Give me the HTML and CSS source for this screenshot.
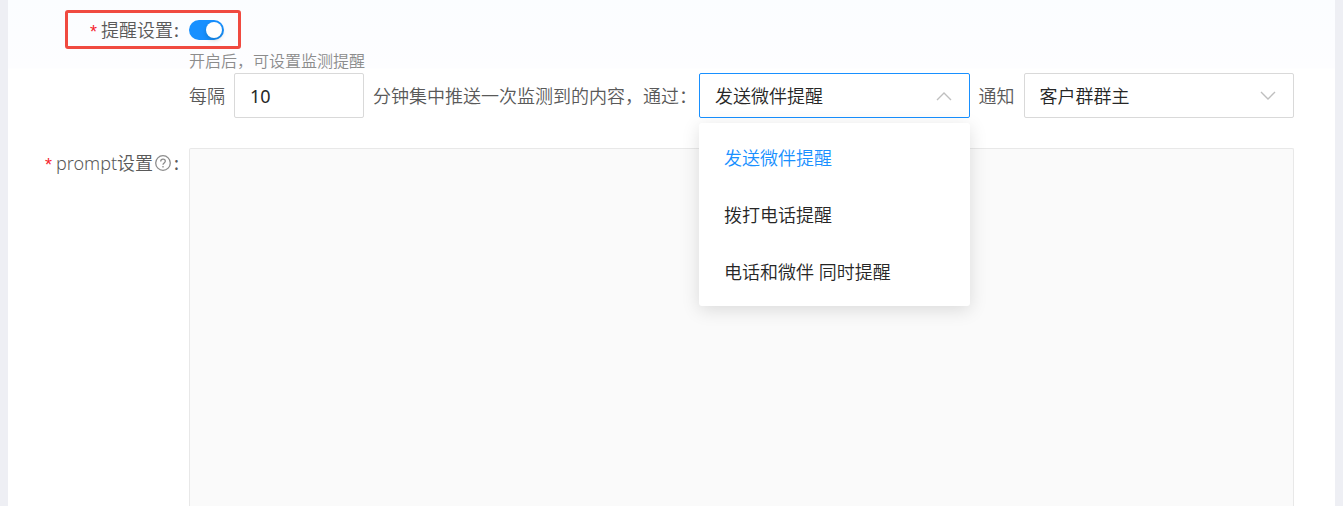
FILE: index.html
```html
<!DOCTYPE html>
<html lang="zh-CN">

<head>
    <meta charset="UTF-8">
    <meta name="viewport" content="width=device-width, initial-scale=1.0">
    <title>提醒设置</title>
    <link rel="stylesheet" href="styles.css">
</head>

<body>
    <form class="page">
        <div class="form-item">
            <div class="label">
                <span class="required">*</span>
                <label for="remind">提醒设置</label>
                <span class="colon">:</span>
            </div>
            <div class="control switch-line">
                <input type="checkbox" id="remind" class="switch" checked>
            </div>
            <!-- 红色标注框 -->
            <div class="mark"></div>
        </div>

        <div class="form-item">
            <div class="control">
                <p class="tip">开启后，可设置监测提醒</p>
                <div class="remind-row">
                    <label for="minute">每隔</label>
                    <input type="text" id="minute" class="ipt" value="10">
                    <label for="way" class="way-label">分钟集中推送一次监测到的内容，通过：</label>
                    <div class="select-box select-open">
                        <select id="way" class="select">
                            <option selected>发送微伴提醒</option>
                            <option>拨打电话提醒</option>
                            <option>电话和微伴 同时提醒</option>
                        </select>
                        <svg class="arrow" viewBox="0 0 16 10">
                            <path d="M1 9l7-7 7 7" />
                        </svg>
                        <!-- 下拉菜单 -->
                        <ul class="menu">
                            <li><button type="button" class="current">发送微伴提醒</button></li>
                            <li><button type="button">拨打电话提醒</button></li>
                            <li><button type="button">电话和微伴 同时提醒</button></li>
                        </ul>
                    </div>
                    <label for="target">通知</label>
                    <div class="select-box">
                        <select id="target" class="select">
                            <option selected>客户群群主</option>
                        </select>
                        <svg class="arrow" viewBox="0 0 16 10">
                            <path d="M1 1l7 7 7-7" />
                        </svg>
                    </div>
                </div>
            </div>
        </div>

        <div class="form-item prompt-item">
            <div class="label">
                <span class="required">*</span>
                <label for="prompt">prompt设置</label>
                <svg class="help" viewBox="0 0 16 16">
                    <circle cx="8" cy="8" r="7.3" />
                    <path d="M5.7 6.5c0-1.4 1-2.3 2.3-2.3s2.3.9 2.3 2.1c0 1.6-2.3 1.7-2.3 3.4" />
                    <path d="M8 11v1.4" />
                </svg>
                <span class="colon">:</span>
            </div>
            <div class="control">
                <textarea id="prompt" class="prompt"></textarea>
            </div>
        </div>
    </form>
</body>

</html>
```
FILE: styles.css
```css
* {
    margin: 0;
    padding: 0;
    box-sizing: border-box;
}

body,
input,
select,
textarea,
button {
    font-family: "Noto Sans", "Noto Sans CJK SC", sans-serif;
    font-size: 18px;
    font-weight: 350;
}

body {
    padding: 0 8px;
    background: #eeeff4;
    color: #595959;
    line-height: 30px;
}

ul {
    list-style: none;
}

.page {
    display: flex;
    flex-direction: column;
    height: 100vh;
    padding: 15px 41px 0 0;
    background: linear-gradient(#fbfdff, #fdfdff 68px, #fff 69px);
}

.form-item {
    position: relative;
    display: grid;
    grid-template-columns: 181px 1fr;
}

.prompt-item {
    flex: 1;
}

.label {
    display: flex;
    align-items: center;
    justify-content: flex-end;
    height: 30px;
    padding-right: 10px;
}

.required {
    padding-top: 4px;
    margin-right: 4px;
    color: #f5222d;
    font-family: "Liberation Sans", sans-serif;
    font-size: 18px;
}

.colon {
    margin-left: 1px;
    font-weight: 500;
}

.control {
    grid-column: 2;
}

.switch-line {
    display: flex;
    align-items: center;
}

.switch {
    appearance: none;
    width: 35px;
    height: 20px;
    padding: 2px;
    border-radius: 10px;
    background: #bfbfbf;
    cursor: pointer;
}

.switch::before {
    content: "";
    display: block;
    width: 16px;
    height: 16px;
    border-radius: 50%;
    background: #fff;
    box-shadow: 0 2px 4px rgba(0, 35, 11, 0.2);
}

.switch:checked {
    background: #1890ff;
}

.switch:checked::before {
    margin-left: auto;
}

.mark {
    position: absolute;
    top: -5px;
    left: 57px;
    width: 176px;
    height: 39px;
    border: 3px solid #f04a40;
    border-radius: 3px;
    pointer-events: none;
}

.tip {
    height: 28px;
    line-height: 32px;
    color: #8c8c8c;
    font-size: 16px;
}

.remind-row {
    display: flex;
    align-items: center;
    gap: 9px;
    margin-bottom: 30px;
    white-space: nowrap;
}

.ipt,
.select-box {
    height: 45px;
    border: 1px solid #d9d9d9;
    border-radius: 2px;
    background: #fff;
}

.ipt,
.select {
    padding: 0 15px;
    outline: none;
    color: #262626;
}

.ipt {
    width: 130px;
    font-weight: 400;
}

/* 全角冒号自带右侧空白 */
.way-label {
    margin-right: -7px;
}

.select-box {
    position: relative;
    display: flex;
    flex: 1;
}

.select-open {
    border-color: #1890ff;
}

.select {
    appearance: none;
    width: 100%;
    border: 0;
    background: none;
}

.arrow {
    position: absolute;
    top: 17px;
    right: 17px;
    width: 16px;
    height: 10px;
    fill: none;
    stroke: #bfbfbf;
    stroke-width: 1.4;
    pointer-events: none;
}

.menu {
    position: absolute;
    top: 49px;
    left: -1px;
    right: -1px;
    z-index: 1;
    padding: 6px 0;
    border-radius: 3px;
    background: #fff;
    box-shadow: 0 4px 18px rgba(0, 0, 0, 0.13);
}

.menu button {
    display: block;
    width: 100%;
    height: 57px;
    padding: 0 25px 2px;
    border: 0;
    background: none;
    color: #262626;
    text-align: left;
    cursor: pointer;
}

.menu .current {
    color: #1890ff;
}

.help {
    width: 16px;
    height: 16px;
    margin: 0 2px;
    fill: none;
    stroke: #8c8c8c;
    stroke-width: 1.3;
}

.prompt {
    display: block;
    width: 100%;
    height: 100%;
    padding: 10px 15px;
    border: 1px solid #e8e8e8;
    border-bottom: 0;
    border-radius: 2px 2px 0 0;
    outline: none;
    background: #fafafa;
    resize: none;
}
```
